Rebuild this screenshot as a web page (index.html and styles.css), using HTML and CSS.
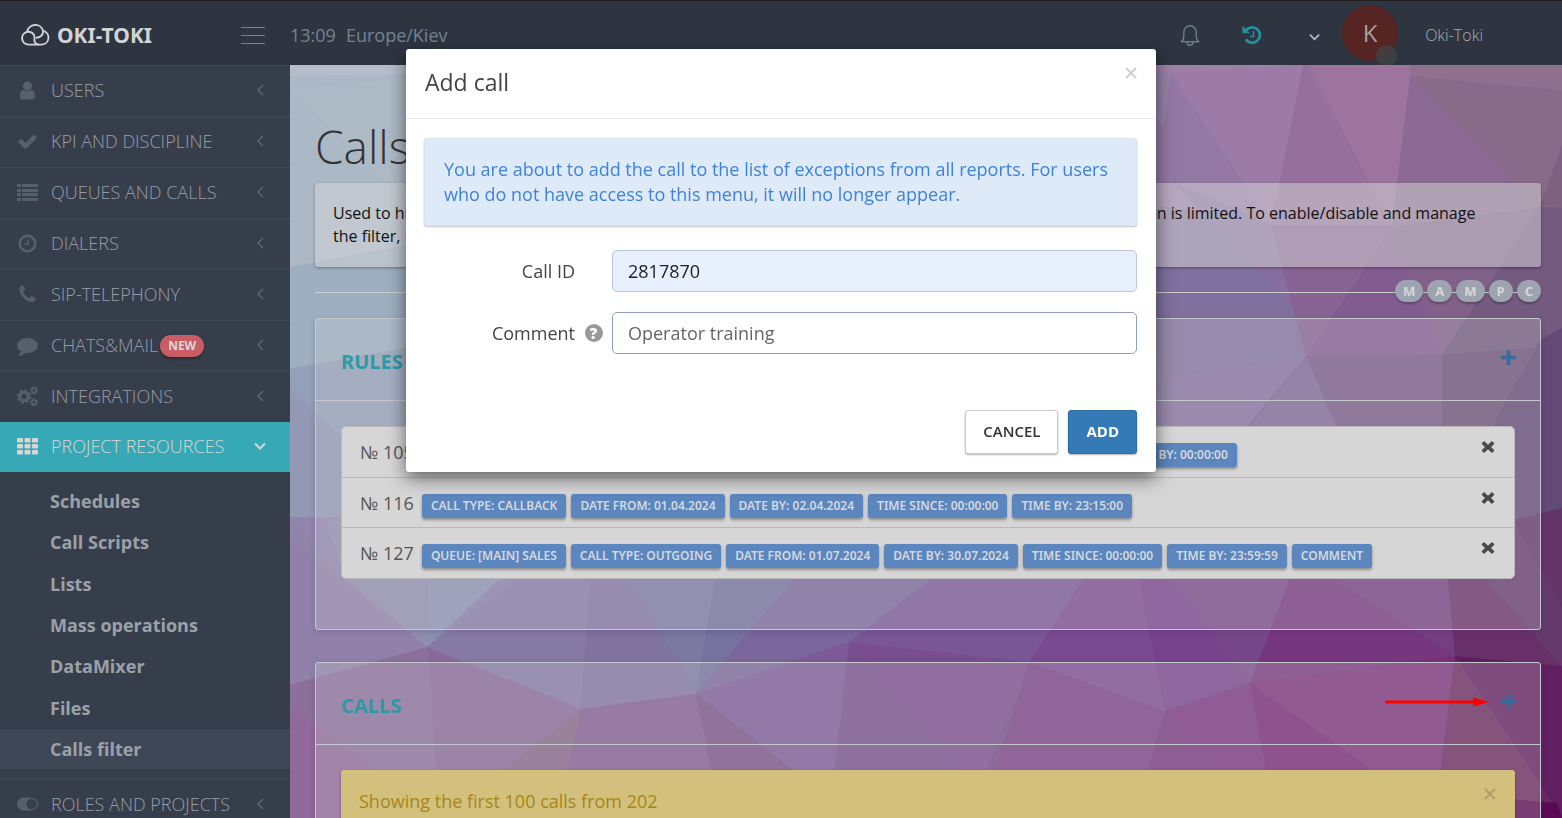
FILE: index.html
```html
<!DOCTYPE html>
<html lang="en">
<head>
<meta charset="utf-8">
<meta name="viewport" content="width=device-width, initial-scale=1">
<title>Calls filter</title>
<link rel="stylesheet" href="styles.css">
</head>
<body>
<svg class="symbols" aria-hidden="true">
  <symbol id="i-left" viewBox="0 0 8 14"><path d="M7 2 2 7l5 5" fill="none" stroke="currentColor" stroke-width="1.4"/></symbol>
  <symbol id="i-down" viewBox="0 0 12 8"><path d="M1 1.500 6 6.500l5-5" fill="none" stroke="currentColor" stroke-width="2"/></symbol>
  <symbol id="i-times" viewBox="0 0 14 14"><path d="M3 1.500 7 5.300l4-3.800L13 3.600 9.500 7 13 10.400 11 12.500 7 8.700l-4 3.800L1 10.400 4.500 7 1 3.600z" fill="currentColor" stroke="currentColor" stroke-width="1" stroke-linejoin="round"/></symbol>
  <symbol id="i-plus" viewBox="0 0 15 15"><path d="M6 0h3v6h6v3H9v6H6V9H0V6h6z" fill="currentColor" stroke="currentColor" stroke-width=".6"/></symbol>
  <symbol id="i-close" viewBox="0 0 12 12"><path d="m1 1 10 10M11 1 1 11" fill="none" stroke="currentColor" stroke-width="2"/></symbol>
</svg>
<header class="topbar">
  <a class="brand" href="#">
    <svg class="brand-mark" viewBox="0 0 30 22" fill="none" stroke="currentColor" stroke-width="1.900" stroke-linecap="round"><path d="M8.500 20.600a6.400 6.400 0 1 1 5.600-9.500c1.200 2.300-.6 5 .8 7.200 1 1.500 2.400 2.300 4.200 2.300z"/><path d="M7.200 7.500a8.200 8.200 0 0 1 15.900-.7 7 7 0 0 1-1.300 13.800h-4"/><path d="M23.100 6.800c.4 4.200-2.800 6.800-6.600 7"/></svg>
    <span>OKI-TOKI</span>
  </a>
  <button class="burger" type="button" aria-label="Toggle menu"><i></i><i></i><i></i></button>
  <div class="clock"><span>13:09</span><span>Europe/Kiev</span></div>
  <div class="tools">
    <button class="tool bell" type="button" aria-label="Notifications"><svg viewBox="0 0 20 22" fill="none" stroke="currentColor" stroke-width="1.400" stroke-linejoin="round"><path d="M1.200 17.800c2-1.500 2.600-3.300 2.600-6V8a6.200 6.200 0 0 1 12.400 0v3.800c0 2.700.6 4.500 2.600 6z"/><path d="M7 18.200a3 3 0 0 0 6 0"/></svg></button>
    <button class="tool history" type="button" aria-label="History"><svg viewBox="0 0 20 20" fill="none" stroke="currentColor"><path d="M4.200 5.200a7.700 7.700 0 1 1-.4 9.200" stroke-width="2.800"/><path d="M.5.800v7.400h7.400z" fill="currentColor" stroke="none"/><path d="M11.500 6v5.500H7.800" stroke-width="1.600"/></svg></button>
    <button class="tool more" type="button" aria-label="More"><svg><use href="#i-down"/></svg></button>
    <div class="avatar">K<span class="status"></span></div>
    <a class="account" href="#">Oki-Toki</a>
  </div>
</header>
<div class="shell">
  <nav class="sidebar">
    <a class="nav-row" href="#"><svg class="nav-icon" viewBox="0 0 1792 1792"><path d="M1536 1399q0 109-62.500 187t-150.500 78h-854q-88 0-150.500-78t-62.500-187q0-85 8.500-160.500t31.500-152 58.500-131 94-89 134.500-34.500q131 128 313 128t313-128q76 0 134.500 34.500t94 89 58.500 131 31.500 152 8.500 160.500zm-256-887q0 159-112.500 271.500t-271.500 112.500-271.500-112.500-112.500-271.500 112.500-271.500 271.500-112.500 271.500 112.500 112.500 271.500z"/></svg><span>USERS</span><svg class="caret"><use href="#i-left"/></svg></a>
    <a class="nav-row" href="#"><svg class="nav-icon" viewBox="0 0 1792 1792"><path d="M1671 566q0 40-28 68l-724 724-136 136q-28 28-68 28t-68-28l-136-136-362-362q-28-28-28-68t28-68l136-136q28-28 68-28t68 28l294 295 656-657q28-28 68-28t68 28l136 136q28 28 28 68z"/></svg><span>KPI AND DISCIPLINE</span><svg class="caret"><use href="#i-left"/></svg></a>
    <a class="nav-row" href="#"><svg class="nav-icon" viewBox="0 0 21 21"><path d="M0 2h4v3H0zM5 2h16v3H5zM0 7h4v3H0zM5 7h16v3H5zM0 11h4v3H0zM5 11h16v3H5zM0 16h4v3H0zM5 16h16v3H5z"/></svg><span>QUEUES AND CALLS</span><svg class="caret"><use href="#i-left"/></svg></a>
    <a class="nav-row" href="#"><svg class="nav-icon" viewBox="0 0 1792 1792"><path d="M1024 544v448q0 14-9 23t-23 9h-320q-14 0-23-9t-9-23v-64q0-14 9-23t23-9h224v-352q0-14 9-23t23-9h64q14 0 23 9t9 23zm416 352q0-148-73-273t-198-198-273-73-273 73-198 198-73 273 73 273 198 198 273 73 273-73 198-198 73-273zm224 0q0 209-103 385.500t-279.500 279.500-385.500 103-385.500-103-279.500-279.500-103-385.500 103-385.500 279.500-279.500 385.500-103 385.500 103 279.500 279.500 103 385.500z"/></svg><span>DIALERS</span><svg class="caret"><use href="#i-left"/></svg></a>
    <a class="nav-row" href="#"><svg class="nav-icon" viewBox="0 0 1792 1792"><path d="M1600 1240q0 27-10 70.500t-21 68.500q-21 50-122 106-94 51-186 51-27 0-52.500-3.500t-57.500-12.500-47.500-14.500-55.500-20.500-49-18q-98-35-175-83-128-79-264.500-215.500t-215.500-264.500q-48-77-83-175-3-9-18-49t-20.500-55.500-14.500-47.500-12.500-57.500-3.500-52.500q0-92 51-186 56-101 106-122 25-11 68.500-21t70.500-10q14 0 21 3 18 6 53 76 11 19 30 54t35 63.500 31 53.500q3 4 17.500 25t21.500 35.500 7 28.500q0 20-28.500 50t-62 55-62 53-28.500 46q0 9 5 22.500t8.500 20.500 14 24 11.500 19q76 137 174 235t235 174q2 1 19 11.500t24 14 20.500 8.500 22.500 5q18 0 46-28.500t53-62 55-62 50-28.500q14 0 28.500 7t35.500 21.500 25 17.500q25 15 53.500 31t63.500 35 54 30q70 35 76 53 3 7 3 21z"/></svg><span>SIP-TELEPHONY</span><svg class="caret"><use href="#i-left"/></svg></a>
    <a class="nav-row" href="#"><svg class="nav-icon" viewBox="0 0 1792 1792"><path d="M1792 896q0 174-120 321.500t-326 233-450 85.500q-70 0-145-8-198 175-460 242-49 14-114 22h-5q-15 0-27-10.500t-16-27.500v-1q-3-4-.5-12t2-10 4.500-9.500l6-9 7-8.500 8-9q7-8 31-34.500t34.500-38 31-39.500 32.500-51 27-59 26-76q-157-89-247.500-220t-90.500-281q0-174 120-321.500t326-233 450-85.500 450 85.500 326 233 120 321.500z"/></svg><span>CHATS&amp;MAIL</span><span class="new">NEW</span><svg class="caret"><use href="#i-left"/></svg></a>
    <a class="nav-row" href="#"><svg class="nav-icon gears" viewBox="0 0 21 21" fill="none" stroke="currentColor"><circle cx="7" cy="10.500" r="4.200" stroke-width="3"/><circle cx="7" cy="10.500" r="6.300" stroke-width="2" stroke-dasharray="2.470 2.470"/><circle cx="17" cy="4.500" r="2.200" stroke-width="1.600"/><circle cx="17" cy="4.500" r="3.500" stroke-width="1.400" stroke-dasharray="1.370 1.370"/><circle cx="17" cy="16.200" r="2.200" stroke-width="1.600"/><circle cx="17" cy="16.200" r="3.500" stroke-width="1.400" stroke-dasharray="1.370 1.370"/></svg><span>INTEGRATIONS</span><svg class="caret"><use href="#i-left"/></svg></a>
    <a class="nav-row active" href="#"><svg class="nav-icon" viewBox="0 0 21 21"><g><rect x="0" y="2" width="6" height="4.500" rx="1"/><rect x="7.500" y="2" width="6" height="4.500" rx="1"/><rect x="15" y="2" width="6" height="4.500" rx="1"/><rect x="0" y="8" width="6" height="4.500" rx="1"/><rect x="7.500" y="8" width="6" height="4.500" rx="1"/><rect x="15" y="8" width="6" height="4.500" rx="1"/><rect x="0" y="14" width="6" height="4.500" rx="1"/><rect x="7.500" y="14" width="6" height="4.500" rx="1"/><rect x="15" y="14" width="6" height="4.500" rx="1"/></g></svg><span>PROJECT RESOURCES</span><svg class="caret open"><use href="#i-down"/></svg></a>
    <ul class="subnav">
      <li><a href="#">Schedules</a></li>
      <li><a href="#">Call Scripts</a></li>
      <li><a href="#">Lists</a></li>
      <li><a href="#">Mass operations</a></li>
      <li><a href="#">DataMixer</a></li>
      <li><a href="#">Files</a></li>
      <li><a class="current" href="#">Calls filter</a></li>
    </ul>
    <a class="nav-row" href="#"><svg class="nav-icon toggle" viewBox="0 0 23 14"><path d="M7 0h9a7 7 0 0 1 0 14H7A7 7 0 0 1 7 0zm9 1.300a5.700 5.700 0 1 0 0 11.400 5.700 5.700 0 0 0 0-11.400z" fill-rule="evenodd"/></svg><span>ROLES AND PROJECTS</span><svg class="caret"><use href="#i-left"/></svg></a>
  </nav>
  <main class="content">
    <svg class="backdrop" viewBox="290 65 1272 753" preserveAspectRatio="none" aria-hidden="true">
      <defs>
        <linearGradient id="sky" x1="0" y1="0" x2="1" y2="1"><stop offset="0" stop-color="#abb8c6"/><stop offset=".5" stop-color="#8275a3"/><stop offset="1" stop-color="#5c1c5e"/></linearGradient>
      </defs>
      <rect x="290" y="65" width="1272" height="753" fill="url(#sky)"/>
      <path fill="#b4bdc9" d="M290 65h200v9l-200 2z"/>
      <path fill="#abb9c7" d="M290 76l200-2v160L290 267z"/>
      <path fill="#aebac6" d="M290 90l200 190V70z"/>
      <path fill="#9dafc0" d="M290 267l200-38v103L290 369z"/>
      <path fill="#93a0b9" d="M290 369l200-37v190l-200-5z"/>
      <path fill="#9398b4" d="M290 390l140 130-140-3z"/>
      <path fill="#9085ae" d="M290 517l130 2 7 128-137 39z"/>
      <path fill="#9085a9" d="M290 517l55 62 82 68-137 39z"/>
      <path fill="#9080aa" d="M290 540l138 107-138 39z"/>
      <path fill="#918eae" d="M345 579l-20-60h101l1 128z"/>
      <path fill="#8b90b2" d="M426 460h200L427 647z"/>
      <path fill="#857aa4" d="M427 647l92-68 72-10-10 140z"/>
      <path fill="#8073a0" d="M591 569h32l73 125-115 15z"/>
      <path fill="#7b78a2" d="M623 569h94l-21 125z"/>
      <path fill="#75729e" d="M717 569h85L696 694z"/>
      <path fill="#7a669b" d="M802 569h140l-93 73-153 52z"/>
      <path fill="#795797" d="M932 579l100-30 60 30-63 83-180-20z"/>
      <path fill="#7a4d8f" d="M849 642l180 20-42 108v48H829z"/>
      <path fill="#774f8e" d="M849 642l145 176H829z"/>
      <path fill="#7d5a97" d="M696 694l153-52-20 176-36-48z"/>
      <path fill="#785087" d="M696 694l97 76v48h-72z"/>
      <path fill="#825d90" d="M581 709l115-15 25 124H540z"/>
      <path fill="#866488" d="M581 709l-24 109H440z"/>
      <path fill="#89699a" d="M427 647l154 62-141 109z"/>
      <path fill="#8d6f9c" d="M290 685l137-38 12 171-149-112z"/>
      <path fill="#91699a" d="M290 706l149 112H290z"/>
      <path fill="#7a4a90" d="M1084 579h55l26 132-136-49z"/>
      <path fill="#77438c" d="M1139 579h33l78 104-85 28z"/>
      <path fill="#774889" d="M1172 579h118l-40 104z"/>
      <path fill="#76377f" d="M1290 579h43l122 77-205 27z"/>
      <path fill="#743f81" d="M1333 579h115l7 77z"/>
      <path fill="#683069" d="M1448 579h114v87l-107-10z"/>
      <path fill="#643a6c" d="M1485 579l-10-80 87-30v197z"/>
      <path fill="#793f86" d="M1029 662l136 49-24 107H980z"/>
      <path fill="#783381" d="M1165 711l85-28 25 135h-140z"/>
      <path fill="#74367c" d="M1165 711l85 107h-115z"/>
      <path fill="#7a3079" d="M1250 683l205-27-20 162h-160z"/>
      <path fill="#762676" d="M1250 683l190 135h-165z"/>
      <path fill="#601f61" d="M1455 656l107 10v152h-127z"/>
      <path fill="#6a285f" d="M1455 656l100 150v12h-120z"/>
      <path fill="#590a54" d="M1510 799l47 4 5 15h-60z"/>
      <path fill="#a180a6" d="M1156 65h147l-132 8-15 5z"/>
      <path fill="#9583a8" d="M1156 73h15l-15 110z"/>
      <path fill="#9478a4" d="M1171 73l100 152-115 60V180z"/>
      <path fill="#9c7ba6" d="M1171 73l132-8-32 160z"/>
      <path fill="#95709c" d="M1303 65h9l80 162-121-2z"/>
      <path fill="#9c749e" d="M1308 65h102v11l-18 151z"/>
      <path fill="#90708f" d="M1410 76V65h152v25z"/>
      <path fill="#886a89" d="M1410 76l152 14v55l-22 62z"/>
      <path fill="#8a6a92" d="M1410 76l130 131-148 20z"/>
      <path fill="#7d617f" d="M1562 145v63l-22-1z"/>
      <path fill="#80709f" d="M1156 180l115 45 35 131-150 23z"/>
      <path fill="#9478a4" d="M1156 120l115 105-115-20z"/>
      <path fill="#886ea0" d="M1171 180l100 45 22 82z"/>
      <path fill="#866392" d="M1271 225h121l-86 131z"/>
      <path fill="#825c90" d="M1392 227l50 128-136 1z"/>
      <path fill="#816089" d="M1392 227l148-20-98 148z"/>
      <path fill="#735a7e" d="M1540 207l22 1v140l-120 7z"/>
      <path fill="#8470a0" d="M1156 379l150-23-67 80h-83z"/>
      <path fill="#7f6898" d="M1306 356l39 90h-110z"/>
      <path fill="#7a5a89" d="M1306 356h136v90h-97z"/>
      <path fill="#6c5178" d="M1442 355l98-8-55 99h-43z"/>
      <path fill="#634976" d="M1540 340l22-12v180l-48 12-32-74z"/>
      <path fill="#633467" d="M1514 520l48-12v100z"/>
    </svg>
    <h1>Calls filter</h1>
    <div class="notice">Used to hide calls from all reports and statistics of the system. The visibility of these calls for users of the section is limited. To enable/disable and manage the filter, use the rules and lists below.</div>
    <div class="legend"><span>M</span><span>A</span><span>M</span><span>P</span><span>C</span></div>
    <section class="panel rules">
      <header class="panel-head"><h2>RULES</h2><button class="add" type="button" aria-label="Add rule"><svg><use href="#i-plus"/></svg></button></header>
      <div class="panel-body">
        <ul class="rule-list">
          <li><span class="number">№ 105</span><span class="tag">QUEUE: SALES</span><span class="tag">CALL TYPE: CALLBACK</span><span class="tag">DATE FROM: 01.03.2024</span><span class="tag">DATE BY: 02.03.2024</span><span class="tag">TIME SINCE: 00:00:00</span><span class="tag">TIME BY: 00:00:00</span><button class="remove" type="button" aria-label="Remove rule 105"><svg><use href="#i-times"/></svg></button></li>
          <li><span class="number">№ 116</span><span class="tag">CALL TYPE: CALLBACK</span><span class="tag">DATE FROM: 01.04.2024</span><span class="tag">DATE BY: 02.04.2024</span><span class="tag">TIME SINCE: 00:00:00</span><span class="tag">TIME BY: 23:15:00</span><button class="remove" type="button" aria-label="Remove rule 116"><svg><use href="#i-times"/></svg></button></li>
          <li><span class="number">№ 127</span><span class="tag">QUEUE: [MAIN] SALES</span><span class="tag">CALL TYPE: OUTGOING</span><span class="tag">DATE FROM: 01.07.2024</span><span class="tag">DATE BY: 30.07.2024</span><span class="tag">TIME SINCE: 00:00:00</span><span class="tag">TIME BY: 23:59:59</span><span class="tag">COMMENT</span><button class="remove" type="button" aria-label="Remove rule 127"><svg><use href="#i-times"/></svg></button></li>
        </ul>
      </div>
    </section>
    <section class="panel">
      <header class="panel-head"><h2>CALLS</h2><svg class="arrow" viewBox="0 0 104 10"><path d="M1.500 5h90" stroke="#f00" stroke-width="3" stroke-linecap="round"/><path d="m88 .5 16 4.500-16 4.500z" fill="#f00"/></svg><button class="add" type="button" aria-label="Add call"><svg><use href="#i-plus"/></svg></button></header>
      <div class="panel-body">
        <div class="warning"><span>Showing the first 100 calls from 202</span><button class="dismiss" type="button" aria-label="Dismiss"><svg><use href="#i-close"/></svg></button></div>
      </div>
    </section>
  </main>
</div>
<div class="overlay">
  <form class="modal" role="dialog" aria-labelledby="modal-title">
    <header class="modal-head"><h3 id="modal-title">Add call</h3><button class="dismiss" type="button" aria-label="Close"><svg><use href="#i-close"/></svg></button></header>
    <div class="modal-body">
      <p class="info">You are about to add the call to the list of exceptions from all reports. For users who do not have access to this menu, it will no longer appear.</p>
      <div class="field"><label for="call-id">Call ID</label><span></span><input class="filled" id="call-id" type="text" value="2817870"></div>
      <div class="field"><label for="comment">Comment</label><button class="help" type="button" aria-label="Help">?</button><input id="comment" type="text" value="Operator training"></div>
    </div>
    <footer class="modal-foot"><button class="btn" type="button">CANCEL</button><button class="btn primary" type="submit">ADD</button></footer>
  </form>
</div>
</body>
</html>
```
FILE: styles.css
```css
* { box-sizing: border-box; }
body {
  margin: 0;
  height: 100vh;
  overflow: hidden;
  display: flex;
  flex-direction: column;
  font-family: "Open Sans", "Noto Sans", sans-serif;
  font-size: 18px;
  color: #444;
}
a { color: inherit; text-decoration: none; }
button { padding: 0; border: 0; background: none; color: inherit; font: inherit; cursor: pointer; }
svg { display: block; }
ul, h1, h2, h3, p { margin: 0; padding: 0; list-style: none; }
.symbols { position: absolute; width: 0; height: 0; }

.topbar {
  flex: none;
  height: 65px;
  display: flex;
  align-items: center;
  padding: 4px 79px 0 20px;
  border-top: 1px solid #211e1f;
  background: #2e3541;
}
.brand { display: flex; align-items: center; gap: 7px; width: 221px; color: #d2d3d5; font-size: 21px; font-weight: 700; font-family: "Noto Sans", sans-serif; }
.brand-mark { width: 30px; height: 22px; }
.burger { display: flex; flex-direction: column; gap: 7px; width: 24px; }
.burger i { height: 1px; background: #76838c; }
.clock { display: flex; gap: 10px; margin-left: 25px; color: #738393; }
.tools { display: flex; align-items: center; margin-left: auto; }
.bell { width: 20px; margin-right: 42px; color: #6d7c8c; }
.history { width: 20px; margin-right: 47px; color: #27909b; }
.more { width: 11px; margin: 4px 22px 0 0; color: #b5b9bc; }
.more svg { width: 11px; height: 8px; }
.avatar {
  position: relative;
  width: 56px;
  height: 56px;
  margin: -4px 27px 0 0;
  border-radius: 50%;
  background: #562422;
  color: #a79f9f;
  font-size: 24px;
  line-height: 56px;
  text-align: center;
}
.status { position: absolute; right: 1px; bottom: -5px; width: 21px; height: 21px; border-radius: 50%; background: rgba(64, 68, 70, .8); }
.account { color: #aaadb2; font-size: 16px; font-weight: 300; }

.shell { flex: 1; min-height: 0; display: flex; }
.sidebar { flex: none; width: 290px; overflow: hidden; background: #373e4b; font-weight: 300; }
.nav-row {
  display: flex;
  align-items: center;
  height: 51px;
  padding: 0 24px 2px 17px;
  border-top: 1px solid #3e4754;
  color: #959da9;
}
.nav-icon { width: 21px; height: 21px; margin-right: 13px; fill: #56606d; color: #56606d; }
.nav-icon.gears { fill: none; }
.nav-icon.toggle { height: 14px; }
.caret { width: 8px; height: 14px; margin: 0 2px 0 auto; color: #5d6875; }
.caret.open { width: 12px; height: 8px; margin-right: 0; color: #d6d6d6; }
.nav-row.active { height: 50px; border-top: 0; background: #37a8b5; color: #d6d6d6; }
.active .nav-icon { fill: #d6d6d6; }
.new { margin: 2px 0 0 2px; padding: 0 8px; border-radius: 11px; background: #ca5c65; color: #d9d6d8; font-size: 12px; font-weight: 700; line-height: 22px; box-shadow: 0 2px 3px rgba(0, 0, 0, .3); }
.subnav { display: flex; flex-direction: column; justify-content: space-between; min-height: 307px; padding: 9px 0 10px; }
.subnav a { display: block; padding-left: 50px; color: #9ba1a9; font-weight: 700; line-height: 40px; }
.subnav .current { background: #3e4756; }

.content { position: relative; z-index: 0; flex: 1; min-width: 0; overflow: hidden; padding: 50px 21px 0 25px; }
.backdrop { position: absolute; z-index: -1; inset: 0; width: 100%; height: 100%; }
h1 { color: #333; font-size: 46px; font-weight: 300; line-height: 62px; }
.notice { min-height: 84px; margin-top: 6px; padding: 19px 44px 19px 18px; border-radius: 3px; background: rgba(215, 215, 215, .5); box-shadow: 0 1px 3px rgba(0, 0, 0, .35); color: #111; font-size: 16px; line-height: 23px; }
.legend { display: flex; justify-content: flex-end; gap: 4px; margin: 13px 0 16px; background: linear-gradient(#c9cfc9, #c9cfc9) 0 12px / 100% 1px no-repeat; }
.legend span { padding: 0 8px; border-radius: 11px; background: #9da3af; color: #d6d7d9; font-size: 13px; font-weight: 700; line-height: 22px; box-shadow: 0 2px 2px rgba(0, 0, 0, .25); }

.panel { margin-bottom: 32px; border: 1px solid #c5c9cd; border-radius: 3px; background: rgba(215, 215, 215, .25); box-shadow: 0 2px 6px rgba(60, 40, 90, .2); }
.panel-head { display: flex; align-items: center; height: 82px; padding: 4px 24px 0 25px; border-bottom: 1px solid #c5c9cd; }
h2 { color: #2a9aa5; font-size: 20px; font-weight: 700; }
.add { margin: -9px 0 0 auto; color: #366d9d; }
.add svg { width: 15px; height: 15px; }
.arrow { width: 104px; height: 10px; margin: -7px 12px 0 auto; }
.arrow + .add { margin-left: 0; }
.panel-body { padding: 25px; }
.rules .panel-body { padding-bottom: 50px; }
.rule-list { border: 1px solid #b9b9bb; border-radius: 5px; background: #d6d6d6; }
.rule-list li { display: flex; align-items: center; gap: 5px; height: 50px; padding: 0 19px 0 18px; }
.rule-list li + li { border-top: 1px solid #b9b9b9; }
.rule-list li:last-child { height: 51px; }
.number { margin-right: 3px; color: #555; }
.tag { margin-top: 6px; padding: 0 9px 1px; border-radius: 3px; background: #5b86be; color: #d4d8de; font-family: "Noto Sans", sans-serif; font-size: 12px; font-weight: 600; line-height: 23px; white-space: nowrap; box-shadow: 0 2px 3px rgba(0, 0, 0, .35); }
.remove { margin: -10px 0 0 auto; color: #484848; }
.remove svg { width: 14px; height: 14px; }
.warning { display: flex; align-items: center; min-height: 62px; padding: 0 19px 0 18px; border-radius: 3px; background: #d2c07c; box-shadow: 0 1px 3px rgba(0, 0, 0, .3); color: #a5871b; }
.dismiss { margin-left: auto; }
.dismiss svg { width: 12px; height: 12px; }
.warning .dismiss { margin-top: -14px; color: #ad9e68; }

.overlay { position: fixed; inset: 0; display: flex; justify-content: center; align-items: flex-start; padding-top: 49px; }
.modal { width: 100%; max-width: 750px; border-radius: 3px; background: #fff; box-shadow: 0 6px 18px rgba(0, 0, 0, .55); }
.modal-head { display: flex; align-items: center; height: 70px; padding: 0 19px 4px; border-bottom: 1px solid #ebebeb; }
h3 { color: #444; font-size: 23px; font-weight: 400; }
.modal-head .dismiss { margin-top: -18px; color: #d0d0d0; }
.modal-body { padding: 19px 19px 56px 18px; }
.info { margin-bottom: 24px; padding: 18px 19px; border: 1px solid #d9e5f3; border-radius: 3px; background: #dfeaf8; box-shadow: 0 1px 2px rgba(0, 0, 0, .25); color: #3f83d9; line-height: 25px; }
.field { display: grid; grid-template-columns: 151px 37px 1fr; align-items: center; }
.field + .field { margin-top: 20px; }
.field label { text-align: right; }
.help { justify-self: center; width: 18px; height: 18px; border-radius: 50%; background: #999; color: #fff; font-size: 15px; font-weight: 800; line-height: 18px; }
.field input { width: 100%; height: 42px; padding: 0 15px; border: 1px solid #8f9fc0; border-radius: 5px; background: #fff; color: #666; font: inherit; outline: 0; }
.field .filled { border-color: #bcc8dc; background: #e8effd; color: #222; }
.modal-foot { display: flex; justify-content: flex-end; gap: 10px; padding: 0 19px 18px; }
.btn { height: 44px; padding: 0 17px 2px; border: 1px solid #ccc; border-radius: 3px; background: #fff; color: #333; font-size: 15px; font-weight: 600; box-shadow: 0 1px 2px rgba(0, 0, 0, .3); }
.primary { border-color: #2e6da4; background: #337ab7; color: #fff; font-weight: 700; }
```
